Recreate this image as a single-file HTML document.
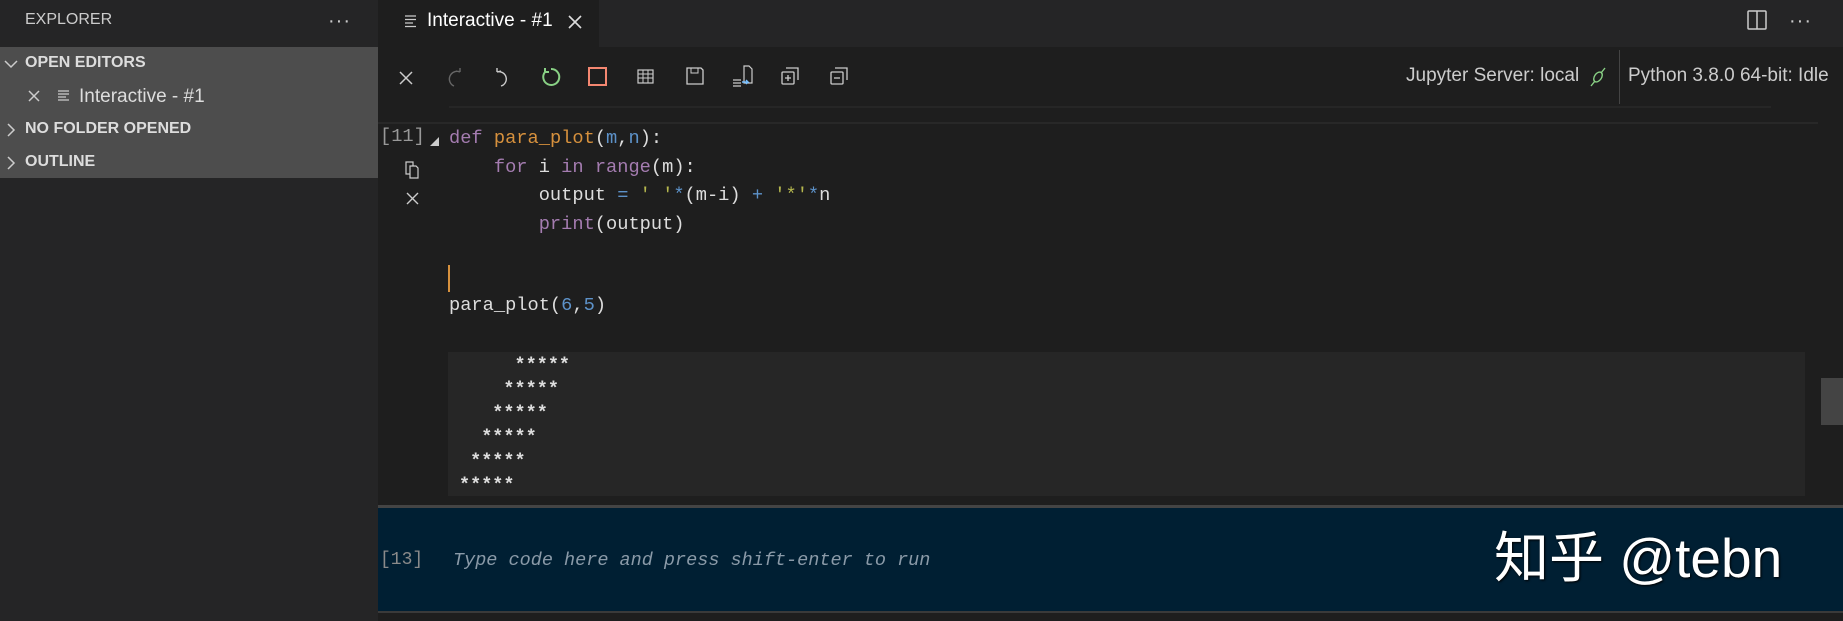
<!DOCTYPE html>
<html><head><meta charset="utf-8"><style>
*{margin:0;padding:0;box-sizing:border-box}
body{width:1843px;height:621px;background:#1e1e1e;position:relative;overflow:hidden;font-family:"Liberation Sans",sans-serif;color:#ccc}
.a{position:absolute;white-space:pre}
.mono{font-family:"Liberation Mono",monospace;font-size:18.7px}
svg{position:absolute}
</style></head><body>
<!-- sidebar -->
<div class="a" style="left:0;top:0;width:378px;height:621px;background:#252526"></div>
<div class="a" style="left:25px;top:11px;font-size:16px;color:#ccc">EXPLORER</div>
<div class="a" style="left:328px;top:10px;font-size:20px;color:#ccc;letter-spacing:1px">···</div>
<div class="a" style="left:0;top:47px;width:378px;height:131px;background:#4d4d4d"></div>
<svg style="left:4px;top:58px" width="14" height="12"><path d="M1 3l6 6 6-6" stroke="#ccc" stroke-width="1.5" fill="none"/></svg>
<div class="a" style="left:25px;top:54px;font-size:16px;font-weight:bold;color:#ddd">OPEN EDITORS</div>
<svg style="left:27px;top:89px" width="14" height="14"><path d="M2 2l10 10M12 2L2 12" stroke="#ccc" stroke-width="1.5"/></svg>
<svg style="left:57px;top:90px" width="14" height="12"><path d="M1 1h11M1 4h11M1 7h8M1 10h11" stroke="#ccc" stroke-width="1.3"/></svg>
<div class="a" style="left:79px;top:86px;font-size:19px;color:#ddd">Interactive - #1</div>
<svg style="left:6px;top:122px" width="10" height="16"><path d="M2 2l6 6-6 6" stroke="#ccc" stroke-width="1.5" fill="none"/></svg>
<div class="a" style="left:25px;top:120px;font-size:16px;font-weight:bold;color:#ddd">NO FOLDER OPENED</div>
<svg style="left:6px;top:155px" width="10" height="16"><path d="M2 2l6 6-6 6" stroke="#ccc" stroke-width="1.5" fill="none"/></svg>
<div class="a" style="left:25px;top:153px;font-size:16px;font-weight:bold;color:#ddd">OUTLINE</div>
<!-- tab bar -->
<div class="a" style="left:378px;top:0;width:1465px;height:47px;background:#252526"></div>
<div class="a" style="left:378px;top:0;width:221px;height:47px;background:#1e1e1e"></div>
<svg style="left:404px;top:15px" width="14" height="14"><path d="M1 1h11M1 4.5h11M1 8h8M1 11.5h11" stroke="#ccc" stroke-width="1.3"/></svg>
<div class="a" style="left:427px;top:10px;font-size:19px;color:#fff">Interactive - #1</div>
<svg style="left:567px;top:14px" width="16" height="16"><path d="M2 2l12 12M14 2L2 14" stroke="#ddd" stroke-width="1.6"/></svg>
<svg style="left:1747px;top:10px" width="20" height="20"><rect x="1" y="1" width="18" height="18" rx="1" stroke="#ccc" stroke-width="1.5" fill="none"/><path d="M10 1v18" stroke="#ccc" stroke-width="1.5"/></svg>
<div class="a" style="left:1789px;top:10px;font-size:20px;color:#ccc;letter-spacing:1px">···</div>
<!-- toolbar -->
<svg style="left:398px;top:70px" width="16" height="16"><path d="M2 2l12 12M14 2L2 14" stroke="#ccc" stroke-width="1.5"/></svg>
<svg style="left:446px;top:66px" width="18" height="22"><path d="M14 6A7 7 0 1 0 8 20M14 6l-4 -1M14 6l0-4" stroke="#666" stroke-width="1.4" fill="none"/></svg>
<svg style="left:493px;top:66px" width="18" height="22"><path d="M4 6A7 7 0 1 1 8 20M4 6l4-1M4 6V2" stroke="#ccc" stroke-width="1.4" fill="none"/></svg>
<svg style="left:540px;top:66px" width="22" height="22"><path d="M5 6A8 8 0 1 0 11 3M5 6V2M5 6h4" stroke="#89d185" stroke-width="2" fill="none"/></svg>
<svg style="left:587px;top:66px" width="22" height="22"><rect x="2" y="2" width="17" height="17" stroke="#f48771" stroke-width="2" fill="none"/></svg>
<svg style="left:637px;top:68px" width="18" height="18"><rect x="1" y="2" width="15" height="13" stroke="#ccc" stroke-width="1.2" fill="none"/><path d="M1 6h15M1 10h15M6 2v13M11 2v13" stroke="#ccc" stroke-width="1"/></svg>
<svg style="left:685px;top:66px" width="20" height="20"><path d="M2 2h14l2 2v14H2z" stroke="#ccc" stroke-width="1.3" fill="none"/><rect x="6" y="2" width="7" height="5" stroke="#ccc" fill="none"/></svg>
<svg style="left:732px;top:64px" width="22" height="24"><path d="M1 16h8M1 19h8M1 22h8" stroke="#ccc" stroke-width="1.2"/><path d="M12 2h5l3 3v14h-8z" stroke="#ccc" stroke-width="1.2" fill="none"/><path d="M10 18h6l-2-2M16 18l-2 2" stroke="#75beff" stroke-width="1.4" fill="none"/></svg>
<svg style="left:779px;top:65px" width="22" height="22"><path d="M7 3h12v12" stroke="#ccc" stroke-width="1.3" fill="none"/><rect x="3" y="7" width="12" height="12" rx="1" stroke="#ccc" stroke-width="1.3" fill="none"/><path d="M9 10v6M6 13h6" stroke="#ccc" stroke-width="1.3"/></svg>
<svg style="left:828px;top:65px" width="22" height="22"><path d="M7 3h12v12" stroke="#ccc" stroke-width="1.3" fill="none"/><rect x="3" y="7" width="12" height="12" rx="1" stroke="#ccc" stroke-width="1.3" fill="none"/><path d="M6 13h6" stroke="#ccc" stroke-width="1.3"/></svg>
<div class="a" style="left:1406px;top:65px;font-size:19px;color:#ccc">Jupyter Server: local</div>
<svg style="left:1588px;top:66px" width="20" height="22"><path d="M3 20l4-5M17 2l-4 5" stroke="#89d185" stroke-width="1.4"/><ellipse cx="10" cy="11" rx="3.5" ry="5.5" transform="rotate(35 10 11)" stroke="#89d185" stroke-width="1.4" fill="none"/></svg>
<div class="a" style="left:1619px;top:50px;width:1px;height:54px;background:#444"></div>
<div class="a" style="left:1628px;top:65px;font-size:19px;color:#ccc">Python 3.8.0 64-bit: Idle</div>
<div class="a" style="left:449px;top:106px;width:1322px;height:2px;background:#262626"></div>
<div class="a" style="left:378px;top:122px;width:1440px;height:2px;background:#282828"></div>
<!-- code cell -->
<div class="a mono" style="left:380px;top:125px;color:#999">[11]</div>
<svg style="left:430px;top:137px" width="10" height="10"><path d="M9 0V9H0z" fill="#ccc"/></svg>
<svg style="left:404px;top:161px" width="16" height="18"><path d="M2 1h7v12H2z" stroke="#ccc" stroke-width="1.2" fill="none"/><path d="M6 5h6l2 2v10H6z" stroke="#ccc" stroke-width="1.2" fill="#1e1e1e"/></svg>
<svg style="left:405px;top:191px" width="15" height="15"><path d="M2 2l11 11M13 2L2 13" stroke="#ccc" stroke-width="1.4"/></svg>
<div class="a mono" style="left:449px;top:124px;color:#ddd;line-height:28.5px"><span style="color:#a47cb0">def</span> <span style="color:#d7913d">para_plot</span>(<span style="color:#5d92c9">m</span>,<span style="color:#5d92c9">n</span>):
    <span style="color:#a47cb0">for</span> i <span style="color:#a47cb0">in</span> <span style="color:#a47cb0">range</span>(m):
        output <span style="color:#5d92c9">=</span> <span style="color:#b5b74e">' '</span><span style="color:#5d92c9">*</span>(m-i) <span style="color:#5d92c9">+</span> <span style="color:#b5b74e">'*'</span><span style="color:#5d92c9">*</span>n
        <span style="color:#a47cb0">print</span>(output)</div>
<div class="a" style="left:448px;top:265px;width:2px;height:27px;background:#d7913d"></div>
<div class="a mono" style="left:449px;top:294px;color:#ddd">para_plot(<span style="color:#5d92c9">6</span>,<span style="color:#5d92c9">5</span>)</div>
<!-- output -->
<div class="a" style="left:448px;top:352px;width:1357px;height:144px;background:#262626"></div>
<div class="a" style="left:459px;top:354px;font-family:'Liberation Mono',monospace;font-size:18.5px;line-height:24px;color:#ddd;font-weight:bold">     *****
    *****
   *****
  *****
 *****
*****</div>
<div class="a" style="left:1821px;top:378px;width:22px;height:47px;background:#444"></div>
<!-- input -->
<div class="a" style="left:378px;top:505px;width:1465px;height:3px;background:#444"></div>
<div class="a" style="left:378px;top:508px;width:1465px;height:104px;background:#001f33"></div>
<div class="a" style="left:378px;top:611px;width:1465px;height:2px;background:#3a3a3a"></div>
<div class="a mono" style="left:380px;top:550px;color:#8a8a8a;font-size:18px">[13]</div>
<div class="a mono" style="left:453px;top:550px;color:#8a9aa8;font-size:18.5px;font-style:italic">Type code here and press shift-enter to run</div>
<div class="a" style="left:1494px;top:513px;font-family:'Liberation Sans','Noto Sans CJK SC',sans-serif;font-size:55px;color:#fff;text-shadow:1px 1px 2px #000">知乎 @tebn</div>
</body></html>
